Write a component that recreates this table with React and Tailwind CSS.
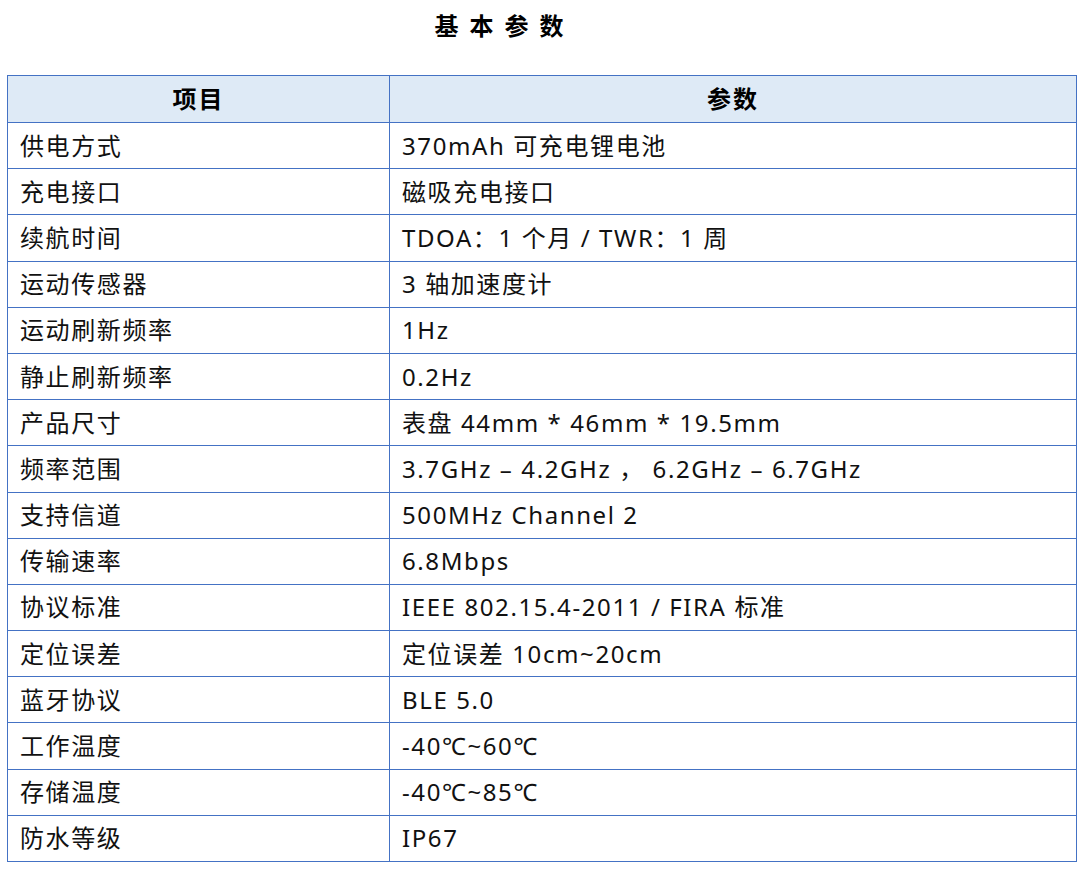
import React from 'react';

const rows = [
  ['供电方式', '370mAh 可充电锂电池'],
  ['充电接口', '磁吸充电接口'],
  ['续航时间', 'TDOA：1 个月 / TWR：1 周'],
  ['运动传感器', '3 轴加速度计'],
  ['运动刷新频率', '1Hz'],
  ['静止刷新频率', '0.2Hz'],
  ['产品尺寸', '表盘 44mm * 46mm * 19.5mm'],
  ['频率范围', '3.7GHz – 4.2GHz ， 6.2GHz – 6.7GHz'],
  ['支持信道', '500MHz Channel 2'],
  ['传输速率', '6.8Mbps'],
  ['协议标准', 'IEEE 802.15.4-2011 / FIRA 标准'],
  ['定位误差', '定位误差 10cm~20cm'],
  ['蓝牙协议', 'BLE 5.0'],
  ['工作温度', '-40℃~60℃'],
  ['存储温度', '-40℃~85℃'],
  ['防水等级', 'IP67'],
];

const App = () => {
  return (
    <div
      className="w-[1084px] h-[871px] bg-white text-[#111]"
      style={{ fontFamily: '"Noto Sans", "Noto Sans CJK SC", sans-serif' }}
    >
      {/* 标题 */}
      <div className="h-[75px] pt-[9px] pr-[75px] text-center">
        <span className="text-[24px] font-bold tracking-[11px] leading-[34px] text-black">
          基本参数
        </span>
      </div>

      {/* 参数表 */}
      <div className="ml-[7px] w-[1070px] border border-[#4472c4]">
        <div className="grid grid-cols-[382px_1fr] h-[46px] bg-[#deeaf6] text-[24px] font-bold tracking-[2px] text-black">
          <div className="flex items-center justify-center border-r border-[#4472c4]">项目</div>
          <div className="flex items-center justify-center">参数</div>
        </div>
        {rows.map(([name, value]) => (
          <div
            key={name}
            className="grid grid-cols-[382px_1fr] h-[46.2px] border-t border-[#4472c4] text-[24px] tracking-[1.6px]"
          >
            <div className="flex items-center pl-[12px] border-r border-[#4472c4]">{name}</div>
            <div className="flex items-center pl-[12px] whitespace-pre">{value}</div>
          </div>
        ))}
      </div>
    </div>
  );
};

export default App;
